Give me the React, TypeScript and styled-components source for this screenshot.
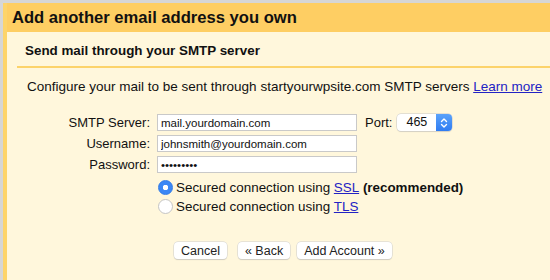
import React, { useState } from 'react';
import styled, { createGlobalStyle } from 'styled-components';

const GlobalStyle = createGlobalStyle`
  html, body {
    margin: 0;
    padding: 0;
    background: #d6d6d6;
    font-family: "Liberation Sans", Arial, sans-serif;
    color: #111;
  }
`;

export default function App() {
  const [secure, setSecure] = useState('ssl');

  return (
    <>
      <GlobalStyle />
      <Page>
        <Dialog>
          <Header>Add another email address you own</Header>
          <SectionHead>Send mail through your SMTP server</SectionHead>
          <Body>
            <Intro>
              Configure your mail to be sent through startyourwpsite.com SMTP
              servers <Link href="#">Learn more</Link>
            </Intro>
            <Form>
              <Row>
                <Label>SMTP Server:</Label>
                <Input defaultValue="mail.yourdomain.com" />
                <PortLabel>Port:</PortLabel>
                <Select>
                  <SelectValue>465</SelectValue>
                  <Stepper>
                    <svg width="8" height="12" viewBox="0 0 8 12">
                      <path
                        d="M1.5 4.5 L4 2 L6.5 4.5 M1.5 7.5 L4 10 L6.5 7.5"
                        fill="none"
                        stroke="#fff"
                        strokeWidth="1.4"
                        strokeLinecap="round"
                        strokeLinejoin="round"
                      />
                    </svg>
                  </Stepper>
                </Select>
              </Row>
              <Row>
                <Label>Username:</Label>
                <Input defaultValue="johnsmith@yourdomain.com" />
              </Row>
              <Row>
                <Label>Password:</Label>
                <Input type="password" defaultValue="password1" />
              </Row>
              <Options>
                <Option onClick={() => setSecure('ssl')}>
                  <Radio $checked={secure === 'ssl'} />
                  Secured connection using&nbsp;<Link href="#">SSL</Link>
                  &nbsp;<strong>(recommended)</strong>
                </Option>
                <Option onClick={() => setSecure('tls')}>
                  <Radio $checked={secure === 'tls'} />
                  Secured connection using&nbsp;<Link href="#">TLS</Link>
                </Option>
              </Options>
            </Form>
            <Buttons>
              <Button>Cancel</Button>
              <Button>« Back</Button>
              <Button>Add Account »</Button>
            </Buttons>
          </Body>
        </Dialog>
      </Page>
    </>
  );
}

const Page = styled.div`
  padding: 3px 0 0 3px;
  height: 277px;
  overflow: hidden;
`;
const Dialog = styled.div`
  height: 100%;
  background: #fff7dc;
  border-left: 4px solid #fdd46a;
`;
const Header = styled.div`
  height: 29px;
  line-height: 29px;
  padding-left: 5px;
  background: #fece63;
  font-size: 16.6px;
  font-weight: bold;
`;
const SectionHead = styled.div`
  margin-left: 10px;
  padding: 11px 0 0 8px;
  height: 23px;
  font-size: 13.4px;
  font-weight: bold;
  border-bottom: 2px solid #fcd36a;
`;
const Body = styled.div`
  padding: 11px 0 0 20px;
`;
const Intro = styled.div`
  font-size: 13.5px;
  line-height: 16px;
  white-space: nowrap;
`;
const Link = styled.a`
  color: #2323c4;
  text-decoration: underline;
`;
const Form = styled.div`
  margin-top: 17px;
`;
const Row = styled.div`
  display: flex;
  align-items: center;
  height: 21px;
`;
const Label = styled.div`
  width: 123px;
  text-align: right;
  font-size: 13px;
  margin-right: 7px;
`;
const Input = styled.input`
  box-sizing: border-box;
  width: 200px;
  height: 17px;
  padding: 0 3px;
  border: 1px solid #c9c9c9;
  background: #fff;
  font-family: "Liberation Sans", Arial, sans-serif;
  font-size: 11.5px;
  color: #111;
  outline: none;
`;
const PortLabel = styled.div`
  font-size: 13px;
  margin-left: 8px;
  margin-right: 5px;
`;
const Select = styled.div`
  display: flex;
  align-items: stretch;
  width: 55px;
  height: 17px;
  border-radius: 4px;
  background: #fff;
  box-shadow: 0 0 0 0.5px #c8c8c8, 0 1px 1px rgba(0, 0, 0, 0.12);
  overflow: hidden;
`;
const SelectValue = styled.div`
  flex: 1;
  font-size: 12.5px;
  line-height: 17px;
  padding-left: 9px;
`;
const Stepper = styled.div`
  width: 16px;
  display: flex;
  align-items: center;
  justify-content: center;
  background: linear-gradient(#5aa2fa, #2f7cf2);
`;
const Options = styled.div`
  margin: 3px 0 0 131px;
`;
const Option = styled.div`
  display: flex;
  align-items: center;
  height: 19px;
  font-size: 13.4px;
  cursor: default;
`;
const Radio = styled.span<{ $checked: boolean }>`
  box-sizing: border-box;
  width: 15px;
  height: 15px;
  margin-right: 3px;
  border-radius: 50%;
  background: ${({ $checked }) =>
    $checked ? 'radial-gradient(circle, #fff 0 2.5px, #3b87f5 3px)' : '#fff'};
  border: 1px solid ${({ $checked }) => ($checked ? '#2f7ae8' : '#c4c4c4')};
`;
const Buttons = styled.div`
  display: flex;
  gap: 11px;
  margin: 26px 0 0 147px;
`;
const Button = styled.button`
  height: 17px;
  padding: 0 7px;
  border: none;
  border-radius: 4px;
  background: #fff;
  box-shadow: 0 0 0 0.5px #cfcfcf, 0 1px 1px rgba(0, 0, 0, 0.18);
  font-family: "Liberation Sans", Arial, sans-serif;
  font-size: 12.5px;
  color: #222;
  &:nth-child(3) {
    margin-left: -4px;
  }
`;
